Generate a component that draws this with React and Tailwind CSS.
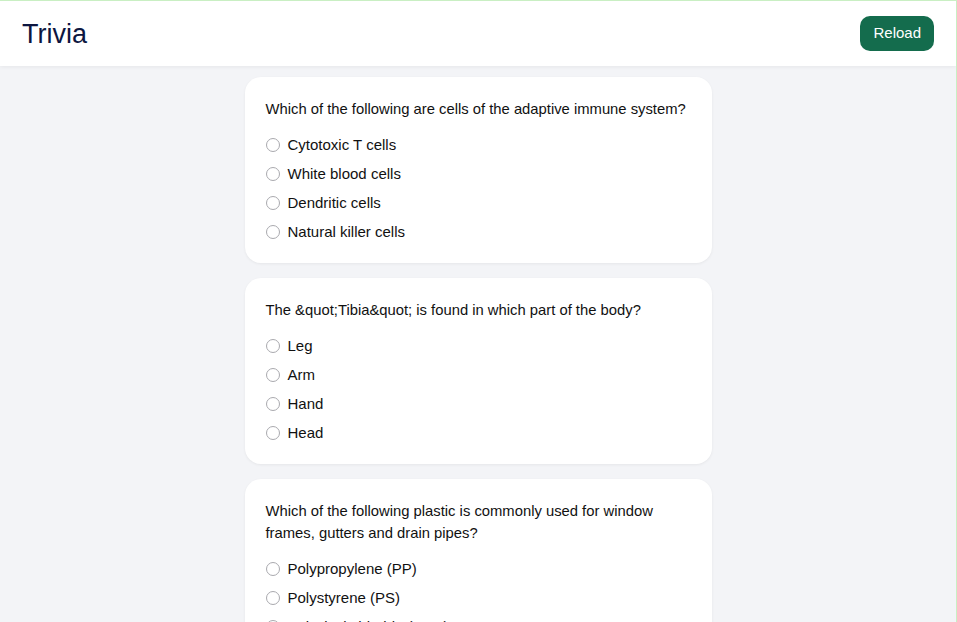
import React from "react";

const questions = [
  {
    q: "Which of the following are cells of the adaptive immune system?",
    a: ["Cytotoxic T cells", "White blood cells", "Dendritic cells", "Natural killer cells"],
  },
  {
    q: "The &quot;Tibia&quot; is found in which part of the body?",
    a: ["Leg", "Arm", "Hand", "Head"],
  },
  {
    q: "Which of the following plastic is commonly used for window frames, gutters and drain pipes?",
    a: ["Polypropylene (PP)", "Polystyrene (PS)", "Polyvinyl chloride (PVC)", "Polyethylene (PE)"],
  },
];

function Card({ q, a }) {
  return (
    <div className="bg-white rounded-[16px] shadow-[0_1px_3px_rgba(0,0,0,0.06)] pl-[21px] pr-[16px] pt-[21px] pb-[20px] flex flex-col">
      <p className="text-[14.8px] leading-[22px] text-[#111]">{q}</p>
      <div className="mt-[14px] flex flex-col gap-[7px]">
        {a.map((o) => (
          <label key={o} className="flex items-center gap-[8px] h-[22px] text-[15px] text-[#111]">
            <span className="w-[14px] h-[14px] rounded-full border border-[#a9a9ae] bg-white shrink-0" />
            <span>{o}</span>
          </label>
        ))}
      </div>
    </div>
  );
}

export default function App() {
  return (
    <div
      className="h-[622px] overflow-hidden bg-[#f3f4f7] border-t border-r border-[#c9efc3]"
      style={{ fontFamily: "'Liberation Sans', Arial, sans-serif" }}
    >
      <header className="h-[65px] bg-white flex items-center justify-between pl-[22px] pr-[22px] shadow-[0_1px_4px_rgba(0,0,0,0.06)] relative z-10">
        <h1 className="text-[27px] leading-none text-[#0d1640] font-normal mt-[2px]">Trivia</h1>
        <button className="h-[35px] px-[13px] rounded-[10px] bg-[#146c4d] text-white text-[15px]">
          Reload
        </button>
      </header>
      <main className="flex justify-center pt-[11px]">
        <div className="w-[467px] flex flex-col gap-[15px]">
          {questions.map((item) => (
            <Card key={item.q} {...item} />
          ))}
        </div>
      </main>
    </div>
  );
}
